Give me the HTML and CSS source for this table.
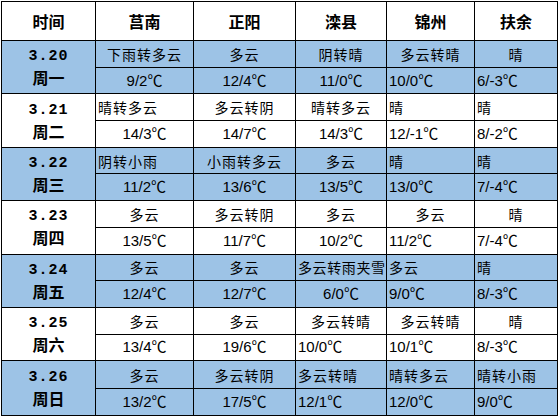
FILE: index.html
```html
<!DOCTYPE html>
<html lang="zh">
<head>
<meta charset="utf-8">
<link rel="stylesheet" href="styles.css">
</head>
<body>
<table class="wx">
  <colgroup>
    <col class="c0"><col class="c1"><col class="c2"><col class="c3"><col class="c4"><col class="c5">
  </colgroup>
  <thead>
    <tr class="head">
      <th>时间</th><th>莒南</th><th>正阳</th><th>滦县</th><th>锦州</th><th>扶余</th>
    </tr>
  </thead>
  <tbody class="blue">
    <tr class="sub">
      <td class="day" rowspan="2"><div class="date">3.20</div><div class="wk">周一</div></td>
      <td class="w">下雨转多云</td><td class="w">多云</td><td class="w">阴转晴</td><td class="w">多云转晴</td><td class="w">晴</td>
    </tr>
    <tr class="sub">
      <td class="t">9/2℃</td><td class="t">12/4℃</td><td class="t">11/0℃</td><td class="t l">10/0℃</td><td class="t l">6/-3℃</td>
    </tr>
  </tbody>
  <tbody class="white">
    <tr class="sub">
      <td class="day" rowspan="2"><div class="date">3.21</div><div class="wk">周二</div></td>
      <td class="w l">晴转多云</td><td class="w">多云转阴</td><td class="w">晴转多云</td><td class="w l">晴</td><td class="w l">晴</td>
    </tr>
    <tr class="sub">
      <td class="t">14/3℃</td><td class="t">14/7℃</td><td class="t">14/3℃</td><td class="t l">12/-1℃</td><td class="t l">8/-2℃</td>
    </tr>
  </tbody>
  <tbody class="blue">
    <tr class="sub">
      <td class="day" rowspan="2"><div class="date">3.22</div><div class="wk">周三</div></td>
      <td class="w l">阴转小雨</td><td class="w">小雨转多云</td><td class="w">多云</td><td class="w l">晴</td><td class="w l">晴</td>
    </tr>
    <tr class="sub">
      <td class="t">11/2℃</td><td class="t">13/6℃</td><td class="t">13/5℃</td><td class="t l">13/0℃</td><td class="t l">7/-4℃</td>
    </tr>
  </tbody>
  <tbody class="white">
    <tr class="sub">
      <td class="day" rowspan="2"><div class="date">3.23</div><div class="wk">周四</div></td>
      <td class="w">多云</td><td class="w">多云转阴</td><td class="w">多云</td><td class="w">多云</td><td class="w">晴</td>
    </tr>
    <tr class="sub">
      <td class="t">13/5℃</td><td class="t">11/7℃</td><td class="t">10/2℃</td><td class="t l">11/2℃</td><td class="t l">7/-4℃</td>
    </tr>
  </tbody>
  <tbody class="blue">
    <tr class="sub">
      <td class="day" rowspan="2"><div class="date">3.24</div><div class="wk">周五</div></td>
      <td class="w">多云</td><td class="w">多云</td><td class="w l tight">多云转雨夹雪</td><td class="w l">多云</td><td class="w l">晴</td>
    </tr>
    <tr class="sub">
      <td class="t">12/4℃</td><td class="t">12/7℃</td><td class="t">6/0℃</td><td class="t l">9/0℃</td><td class="t l">8/-3℃</td>
    </tr>
  </tbody>
  <tbody class="white">
    <tr class="sub">
      <td class="day" rowspan="2"><div class="date">3.25</div><div class="wk">周六</div></td>
      <td class="w">多云</td><td class="w">多云</td><td class="w">多云转晴</td><td class="w">多云转晴</td><td class="w">晴</td>
    </tr>
    <tr class="sub">
      <td class="t">13/4℃</td><td class="t">19/6℃</td><td class="t l">10/0℃</td><td class="t l">10/1℃</td><td class="t l">8/-3℃</td>
    </tr>
  </tbody>
  <tbody class="blue last">
    <tr class="sub">
      <td class="day" rowspan="2"><div class="date">3.26</div><div class="wk">周日</div></td>
      <td class="w">多云</td><td class="w">多云转阴</td><td class="w l">多云转晴</td><td class="w l">晴转多云</td><td class="w l">晴转小雨</td>
    </tr>
    <tr class="sub">
      <td class="t">13/2℃</td><td class="t">17/5℃</td><td class="t l">12/1℃</td><td class="t l">12/0℃</td><td class="t l">9/0℃</td>
    </tr>
  </tbody>
</table>
</body>
</html>
```

FILE: styles.css
```css
html, body {
  margin: 0;
  padding: 0;
  background: #ffffff;
}

body {
  padding: 1px 0 0 1px;
  font-family: "Liberation Sans", "Noto Sans CJK SC", sans-serif;
  color: #000;
}

.wx {
  border-collapse: collapse;
  table-layout: fixed;
  width: 557px;
}

.wx th, .wx td {
  border: 1px solid #000;
  padding: 0;
  text-align: center;
  vertical-align: middle;
  white-space: nowrap;
  overflow: visible;
}

.c0 { width: 94px; }
.c1 { width: 98px; }
.c2 { width: 102px; }
.c3 { width: 91px; }
.c4 { width: 88px; }
.c5 { width: 83px; }

.head { height: 39px; }
.head th {
  font-family: "Noto Sans CJK SC", sans-serif;
  font-weight: 700;
  font-size: 16px;
  line-height: 20px;
  background: #ffffff;
}

.sub { height: 26.7px; }
.last .sub { height: 27.5px; }

.blue td { background: #9dc3e6; }
.white td { background: #ffffff; }

.day {
  font-weight: 700;
}
.date {
  font-family: "Liberation Mono", monospace;
  font-size: 15px;
  line-height: 20px;
  letter-spacing: 1px;
}
.wk {
  font-family: "Noto Sans CJK SC", sans-serif;
  font-size: 16px;
  line-height: 20px;
}

.w {
  font-family: "Noto Sans CJK SC", sans-serif;
  font-size: 14px;
  letter-spacing: 1px;
  line-height: 20px;
}
.w.tight { letter-spacing: 0.6px; }

.t {
  font-size: 15px;
  line-height: 20px;
}

.wx td.l {
  text-align: left;
  padding-left: 2px;
}
```
